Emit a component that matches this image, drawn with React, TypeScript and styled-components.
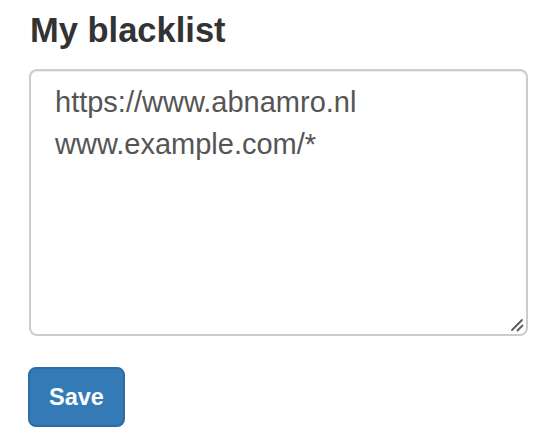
import React from "react";
import styled, { createGlobalStyle } from "styled-components";

const GlobalStyle = createGlobalStyle`
  html, body {
    margin: 0;
    padding: 0;
    background: #ffffff;
  }
  body {
    font-family: "Liberation Sans", Arial, Helvetica, sans-serif;
    color: #333333;
  }
`;

const Page = styled.div`
  display: flex;
  flex-direction: column;
  align-items: flex-start;
  padding: 12px 0 0 29px;
`;

const Title = styled.h1`
  margin: 0 0 20px 1px;
  font-size: 34.5px;
  line-height: 37px;
  font-weight: 700;
  color: #333333;
`;

const AreaWrap = styled.div`
  position: relative;
  margin: 0 0 31px 0;
`;

const ListArea = styled.textarea`
  display: block;
  box-sizing: border-box;
  width: 499px;
  height: 267px;
  margin: 0;
  padding: 10px 24px;
  font-family: "Liberation Sans", Arial, Helvetica, sans-serif;
  font-size: 29px;
  line-height: 42px;
  color: #555555;
  background: #ffffff;
  border: 2px solid #cccccc;
  border-radius: 8px;
  box-shadow: inset 0 1px 1px rgba(0, 0, 0, 0.075);
  outline: none;
  resize: none;
`;

const Grip = styled.svg`
  position: absolute;
  right: 4px;
  bottom: 4px;
  width: 14px;
  height: 14px;
  pointer-events: none;
`;

const SaveButton = styled.button`
  box-sizing: border-box;
  width: 97px;
  height: 60px;
  margin-left: -1px;
  padding: 0;
  font-family: "Liberation Sans", Arial, Helvetica, sans-serif;
  font-size: 23.5px;
  font-weight: 700;
  color: #ffffff;
  background: #337ab7;
  border: 2px solid #2e6da4;
  border-radius: 8px;
  cursor: pointer;
`;

export default function App() {
  return (
    <>
      <GlobalStyle />
      <Page>
        <Title>My blacklist</Title>
        <AreaWrap>
          <ListArea
            defaultValue={"https://www.abnamro.nl\nwww.example.com/*"}
            spellCheck={false}
          />
          <Grip viewBox="0 0 14 14" aria-hidden="true">
            <line x1="2" y1="12" x2="12" y2="2" stroke="#5a5a5a" strokeWidth="1.8" strokeLinecap="round" />
            <line x1="7.5" y1="12.5" x2="12.5" y2="7.5" stroke="#5a5a5a" strokeWidth="1.8" strokeLinecap="round" />
          </Grip>
        </AreaWrap>
        <SaveButton type="button">Save</SaveButton>
      </Page>
    </>
  );
}
